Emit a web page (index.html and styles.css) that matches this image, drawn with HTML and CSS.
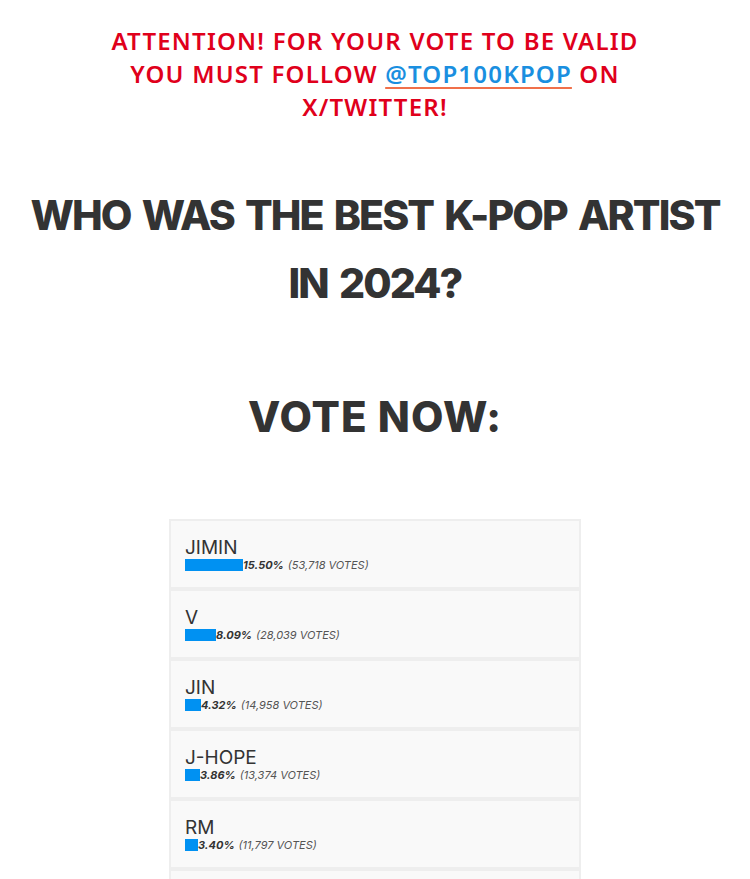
FILE: index.html
```html
<!DOCTYPE html>
<html>
<head>
<meta charset="utf-8">
<link rel="stylesheet" href="styles.css">
</head>
<body>
<main class="page">
  <p class="notice">ATTENTION! FOR YOUR VOTE TO BE VALID<br>YOU MUST FOLLOW <a class="notice-link" href="#">@TOP100KPOP</a> ON<br>X/TWITTER!</p>
  <h1 class="title">WHO WAS THE BEST K-POP ARTIST<br>IN 2024?</h1>
  <h2 class="vote-now">VOTE NOW:</h2>
  <div class="poll">
    <div class="poll-row">
      <div class="poll-name">JIMIN</div>
      <div class="poll-result"><span class="poll-bar" style="width:58px"></span><span class="poll-pct">15.50%</span><span class="poll-votes">(53,718 VOTES)</span></div>
    </div>
    <div class="poll-row">
      <div class="poll-name">V</div>
      <div class="poll-result"><span class="poll-bar" style="width:31px"></span><span class="poll-pct">8.09%</span><span class="poll-votes">(28,039 VOTES)</span></div>
    </div>
    <div class="poll-row">
      <div class="poll-name">JIN</div>
      <div class="poll-result"><span class="poll-bar" style="width:16px"></span><span class="poll-pct">4.32%</span><span class="poll-votes">(14,958 VOTES)</span></div>
    </div>
    <div class="poll-row">
      <div class="poll-name">J-HOPE</div>
      <div class="poll-result"><span class="poll-bar" style="width:15px"></span><span class="poll-pct">3.86%</span><span class="poll-votes">(13,374 VOTES)</span></div>
    </div>
    <div class="poll-row">
      <div class="poll-name">RM</div>
      <div class="poll-result"><span class="poll-bar" style="width:13px"></span><span class="poll-pct">3.40%</span><span class="poll-votes">(11,797 VOTES)</span></div>
    </div>
    <div class="poll-row poll-row-last"></div>
  </div>
</main>
</body>
</html>
```

FILE: styles.css
```css
html, body {
  margin: 0;
  padding: 0;
  background: #ffffff;
}

.page {
  width: 750px;
  text-align: center;
}

.notice {
  margin: 0;
  padding-top: 24px;
  font-family: "Noto Sans", sans-serif;
  font-weight: 600;
  font-size: 24px;
  line-height: 33px;
  letter-spacing: 1.2px;
  color: #e0001b;
}

.notice-link {
  color: #1a8fe0;
  text-decoration: underline;
  text-decoration-color: #f0704a;
  text-decoration-thickness: 2px;
  text-underline-offset: 4px;
}

.title {
  margin: 58px 0 0;
  font-family: "Inter", sans-serif;
  font-weight: 800;
  font-size: 41px;
  line-height: 68px;
  letter-spacing: -1.9px;
  word-spacing: 4px;
  color: #333333;
}

.vote-now {
  margin: 65px 0 0;
  font-family: "Inter", sans-serif;
  font-weight: 800;
  font-size: 42px;
  line-height: 70px;
  letter-spacing: 1px;
  color: #333333;
}

.poll {
  width: 412px;
  margin: 67px auto 0;
  text-align: left;
}

.poll-row {
  box-sizing: border-box;
  height: 70px;
  border: 2px solid #eeeeee;
  background: #f9f9f9;
  padding: 16px 14px;
}

.poll-name {
  font-family: "Inter", sans-serif;
  font-weight: 400;
  font-size: 19px;
  line-height: 22px;
  color: #333333;
}

.poll-result {
  display: flex;
  align-items: center;
  height: 12px;
  font-family: "Inter", sans-serif;
  font-style: italic;
  font-size: 11px;
  line-height: 12px;
  color: #555555;
}

.poll-bar {
  display: block;
  height: 12px;
  background: #0091f2;
  flex: none;
}

.poll-pct {
  font-weight: 700;
  color: #333333;
  margin-right: 4px;
}
```
